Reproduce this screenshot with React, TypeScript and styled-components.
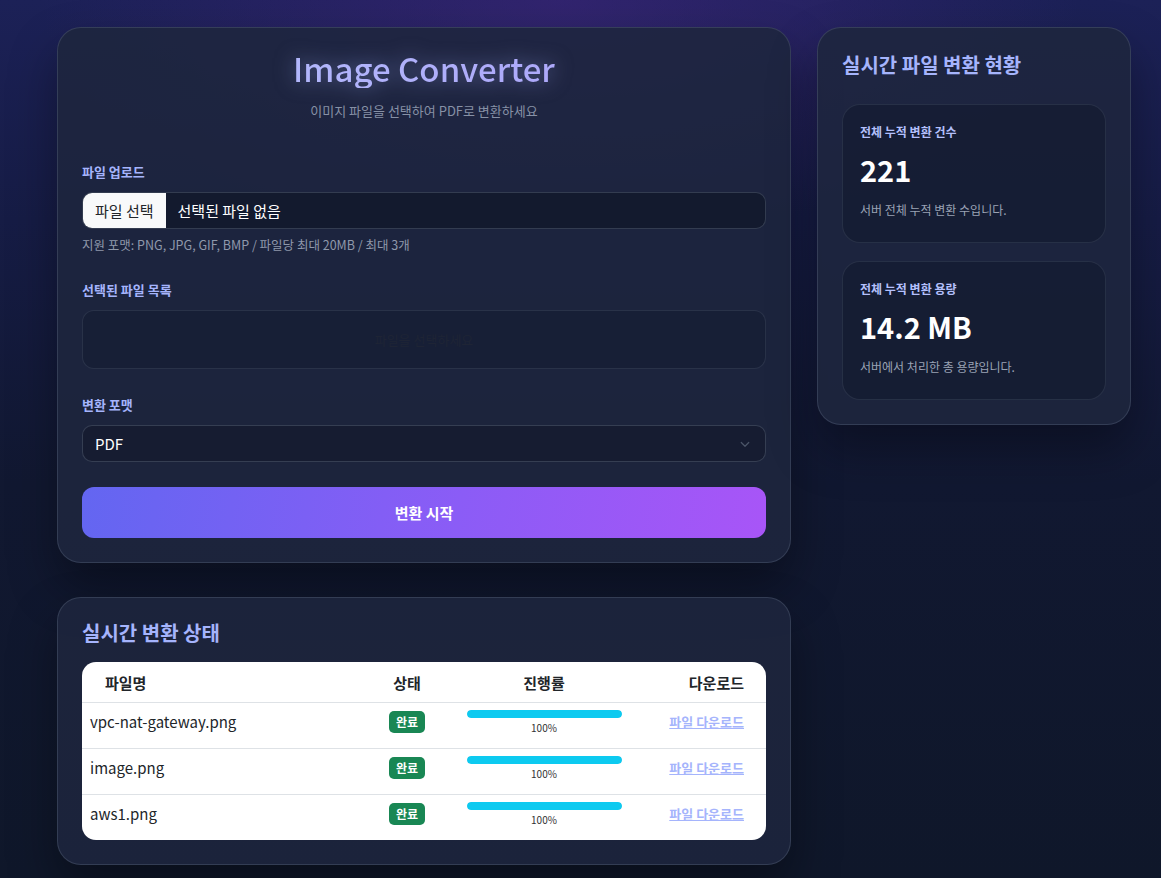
import React from "react";
import styled, { createGlobalStyle } from "styled-components";

const GlobalStyle = createGlobalStyle`
  html, body {
    margin: 0;
    padding: 0;
  }
  body {
    min-height: 100vh;
    font-family: "Noto Sans CJK KR", "Noto Sans", sans-serif;
    background:
      radial-gradient(ellipse 520px 240px at 560px 0px, rgba(76, 40, 140, 0.45), transparent 100%),
      linear-gradient(180deg, #1c2157 0%, #161c45 25%, #111831 55%, #0f172a 100%);
    background-color: #0f172a;
    color: #e2e8f0;
  }
`;

const Page = styled.div`
  display: grid;
  grid-template-columns: 734px 314px;
  gap: 26px;
  align-items: start;
  padding: 27px 30px 14px 57px;
`;

const Column = styled.div`
  display: flex;
  flex-direction: column;
  gap: 34px;
`;

const Card = styled.section<{ $pt?: number }>`
  background: rgba(30, 38, 62, 0.88);
  border: 1px solid rgba(148, 163, 184, 0.2);
  border-radius: 24px;
  box-shadow: 0 24px 48px rgba(0, 0, 0, 0.35);
  padding: ${(p) => p.$pt ?? 24}px 24px 24px;
`;

const Title = styled.h1`
  margin: 0;
  text-align: center;
  font-size: 33px;
  font-weight: 500;
  line-height: 40px;
  background: linear-gradient(90deg, #b6c2fd 0%, #a99df8 100%);
  -webkit-background-clip: text;
  background-clip: text;
  color: transparent;
  filter: drop-shadow(0 0 10px rgba(165, 180, 252, 0.5));
`;

const Subtitle = styled.p`
  margin: 13px 0 0;
  text-align: center;
  font-size: 13px;
  line-height: 19px;
  color: #8791a6;
`;

const Field = styled.div<{ $top: number }>`
  display: flex;
  flex-direction: column;
  margin-top: ${(p) => p.$top}px;
`;

const Label = styled.div`
  font-size: 13px;
  font-weight: 700;
  color: #a5b4fc;
  line-height: 18px;
  margin-bottom: 11px;
`;

const FileInput = styled.div`
  display: flex;
  align-items: center;
  height: 37px;
  box-sizing: border-box;
  background: #131a2e;
  border: 1px solid rgba(148, 163, 184, 0.25);
  border-radius: 10px;
  overflow: hidden;
`;

const FileButton = styled.span`
  display: flex;
  align-items: center;
  height: 100%;
  padding: 0 12px;
  background: #f8f9fa;
  color: #212529;
  font-size: 15px;
`;

const FileName = styled.span`
  padding-left: 12px;
  font-size: 15px;
  color: #ffffff;
`;

const Hint = styled.div`
  margin-top: 6px;
  font-size: 12.5px;
  color: #8f98ab;
`;

const FileList = styled.div`
  height: 59px;
  box-sizing: border-box;
  display: flex;
  align-items: center;
  justify-content: center;
  background: rgba(20, 28, 50, 0.6);
  border: 1px solid rgba(148, 163, 184, 0.15);
  border-radius: 12px;
  font-size: 13px;
  color: #1e2435;
`;

const Select = styled.div`
  height: 37px;
  box-sizing: border-box;
  display: flex;
  align-items: center;
  justify-content: space-between;
  padding: 0 14px 0 12px;
  background: #161c31;
  border: 1px solid rgba(148, 163, 184, 0.25);
  border-radius: 10px;
  font-size: 15px;
  color: #ffffff;
`;

const PrimaryButton = styled.button`
  margin-top: 25px;
  width: 100%;
  height: 51px;
  border: none;
  border-radius: 12px;
  background: linear-gradient(100deg, #6366f1 0%, #8b5cf6 55%, #a855f7 100%);
  color: #ffffff;
  font-family: inherit;
  font-size: 15px;
  font-weight: 700;
  cursor: pointer;
`;

const SectionTitle = styled.h2`
  margin: 0;
  font-size: 20px;
  font-weight: 700;
  line-height: 28px;
  color: #a5b4fc;
`;

const TableWrap = styled.div`
  margin-top: 15px;
  background: #ffffff;
  border-radius: 14px;
  overflow: hidden;
`;

const Table = styled.table`
  width: 100%;
  table-layout: fixed;
  border-collapse: collapse;
  color: #212529;
`;

const Col = styled.col<{ $w: number }>`
  width: ${(p) => p.$w}px;
`;

const Th = styled.th<{ $align: string }>`
  height: 40px;
  padding: 0 24px 0 23px;
  font-size: 15px;
  font-weight: 700;
  text-align: ${(p) => p.$align};
  border-bottom: 1px solid #dee2e6;
`;

const CenterTh = styled(Th)`
  padding: 0;
`;

const Td = styled.td<{ $align: string }>`
  height: 37px;
  padding: 0 8px 8px;
  font-size: 15px;
  line-height: 22px;
  text-align: ${(p) => p.$align};
  vertical-align: middle;
  border-bottom: 1px solid #dee2e6;
  white-space: nowrap;
  tr:last-child > & {
    border-bottom: none;
  }
`;

const LinkCell = styled(Td)`
  padding-right: 24px;
`;

const Badge = styled.span`
  display: inline-block;
  vertical-align: middle;
  padding: 3px 7px;
  border-radius: 5px;
  background: #198754;
  color: #ffffff;
  font-size: 12px;
  font-weight: 700;
  line-height: 16px;
`;

const Progress = styled.div`
  display: flex;
  flex-direction: column;
  align-items: center;
  gap: 3px;
  padding-top: 2px;
`;

const Track = styled.div`
  width: 155px;
  height: 8px;
  border-radius: 4px;
  background: #e9ecef;
  overflow: hidden;
`;

const Bar = styled.div`
  height: 100%;
  background: #0dcaf0;
  border-radius: 4px;
`;

const Percent = styled.span`
  font-size: 10px;
  color: #333;
  line-height: 14px;
`;

const DownloadLink = styled.a`
  color: #a5b4fc;
  font-size: 13px;
  font-weight: 700;
  text-decoration: underline;
`;

const SideTitle = styled(SectionTitle)`
  margin-bottom: 25px;
`;

const StatList = styled.div`
  display: flex;
  flex-direction: column;
  gap: 18px;
`;

const StatCard = styled.div`
  background: rgba(17, 24, 44, 0.55);
  border: 1px solid rgba(148, 163, 184, 0.14);
  border-radius: 18px;
  padding: 18px 17px 23px;
`;

const StatLabel = styled.div`
  font-size: 12px;
  font-weight: 700;
  color: #b4c0fc;
  line-height: 18px;
`;

const StatValue = styled.div`
  margin-top: 8px;
  font-size: 29px;
  font-weight: 700;
  color: #ffffff;
  line-height: 40px;
`;

const StatDesc = styled.div`
  margin-top: 12px;
  font-size: 12px;
  color: #9aa3b5;
  line-height: 18px;
`;

const Chevron = () => (
  <svg width="12" height="12" viewBox="0 0 16 16" fill="none">
    <path d="M3 6l5 5 5-5" stroke="#4b5568" strokeWidth="1.6" strokeLinecap="round" strokeLinejoin="round" />
  </svg>
);

const files = ["vpc-nat-gateway.png", "image.png", "aws1.png"];

const stats = [
  { label: "전체 누적 변환 건수", value: "221", desc: "서버 전체 누적 변환 수입니다." },
  { label: "전체 누적 변환 용량", value: "14.2 MB", desc: "서버에서 처리한 총 용량입니다." },
];

export default function App() {
  return (
    <Page>
      <GlobalStyle />
      <Column>
        <Card $pt={20}>
          <Title>Image Converter</Title>
          <Subtitle>이미지 파일을 선택하여 PDF로 변환하세요</Subtitle>

          <Field $top={43}>
            <Label>파일 업로드</Label>
            <FileInput>
              <FileButton>파일 선택</FileButton>
              <FileName>선택된 파일 없음</FileName>
            </FileInput>
            <Hint>지원 포맷: PNG, JPG, GIF, BMP / 파일당 최대 20MB / 최대 3개</Hint>
          </Field>

          <Field $top={27}>
            <Label>선택된 파일 목록</Label>
            <FileList>파일을 선택하세요</FileList>
          </Field>

          <Field $top={27}>
            <Label>변환 포맷</Label>
            <Select>
              PDF
              <Chevron />
            </Select>
          </Field>

          <PrimaryButton>변환 시작</PrimaryButton>
        </Card>

        <Card $pt={21}>
          <SectionTitle>실시간 변환 상태</SectionTitle>
          <TableWrap>
            <Table>
              <colgroup>
                <Col $w={279} />
                <Col $w={92} />
                <Col $w={182} />
                <Col $w={133} />
              </colgroup>
              <thead>
                <tr>
                  <Th $align="left">파일명</Th>
                  <CenterTh $align="center">상태</CenterTh>
                  <CenterTh $align="center">진행률</CenterTh>
                  <Th $align="right">다운로드</Th>
                </tr>
              </thead>
              <tbody>
                {files.map((f) => (
                  <tr key={f}>
                    <Td $align="left">{f}</Td>
                    <Td $align="center">
                      <Badge>완료</Badge>
                    </Td>
                    <Td $align="center">
                      <Progress>
                        <Track>
                          <Bar style={{ width: "100%" }} />
                        </Track>
                        <Percent>100%</Percent>
                      </Progress>
                    </Td>
                    <LinkCell $align="right">
                      <DownloadLink href="#">파일 다운로드</DownloadLink>
                    </LinkCell>
                  </tr>
                ))}
              </tbody>
            </Table>
          </TableWrap>
        </Card>
      </Column>

      <Card $pt={23}>
        <SideTitle>실시간 파일 변환 현황</SideTitle>
        <StatList>
          {stats.map((s) => (
            <StatCard key={s.label}>
              <StatLabel>{s.label}</StatLabel>
              <StatValue>{s.value}</StatValue>
              <StatDesc>{s.desc}</StatDesc>
            </StatCard>
          ))}
        </StatList>
      </Card>
    </Page>
  );
}
